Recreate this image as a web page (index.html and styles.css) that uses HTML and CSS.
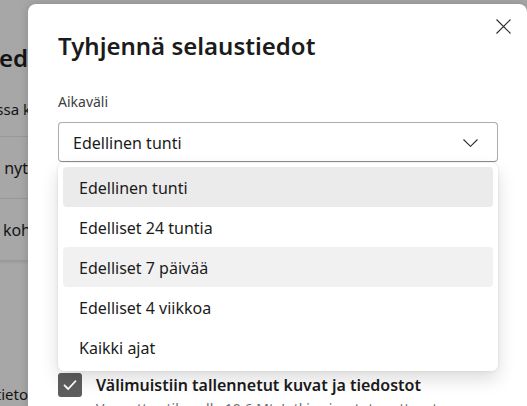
FILE: index.html
```html
<!DOCTYPE html>
<html lang="fi">
<head>
<meta charset="utf-8">
<title>Tyhjennä selaustiedot</title>
<link rel="stylesheet" href="styles.css">
</head>
<body>
<div class="page">
  <div class="bg">
    <div class="bg-line bg-title"><span>Selaustied</span></div>
    <div class="bg-line bg-sub"><span class="cut">Tietosuojassa k</span></div>
    <div class="bg-card">
      <div class="bg-line bg-row"><span>nyt</span></div>
      <div class="bg-line bg-row"><span class="cut">Valitse tyhjennettävät koh</span></div>
    </div>
    <div class="bg-line bg-foot"><span>selaustieto</span></div>
  </div>

  <div class="dialog">
    <div class="dlg-head">
      <h1 class="dlg-title">Tyhjennä selaustiedot</h1>
      <button class="close" aria-label="Sulje">
        <svg width="15" height="15" viewBox="0 0 15 15"><path d="M0.5 0.5 L14.5 14.5 M14.5 0.5 L0.5 14.5" stroke="#2b2b2b" stroke-width="1.1" fill="none"/></svg>
      </button>
    </div>
    <div class="field-label">Aikaväli</div>
    <div class="field">
      <div class="select">
        <span>Edellinen tunti</span>
        <svg width="15" height="8" viewBox="0 0 15 8"><path d="M0.5 0.5 L7.5 7.3 L14.5 0.5" stroke="#2b2b2b" stroke-width="1.1" fill="none"/></svg>
      </div>
      <div class="menu">
        <div class="menu-item selected">Edellinen tunti</div>
        <div class="menu-item">Edelliset 24 tuntia</div>
        <div class="menu-item hover">Edelliset 7 päivää</div>
        <div class="menu-item">Edelliset 4 viikkoa</div>
        <div class="menu-item">Kaikki ajat</div>
      </div>
    </div>
    <div class="option">
      <span class="checkbox">
        <svg width="24" height="24" viewBox="0 0 24 24"><path d="M6.5 12.3 L10.2 16 L17.5 8.2" stroke="#fff" stroke-width="1.8" fill="none" stroke-linecap="round" stroke-linejoin="round"/></svg>
      </span>
      <div class="option-text">
        <div class="option-title">Välimuistiin tallennetut kuvat ja tiedostot</div>
        <div class="option-sub">Vapauttaa tilaa alle 10,6 Mt. Jotkin sivustot saattavat</div>
      </div>
    </div>
  </div>
</div>
</body>
</html>
```

FILE: styles.css
```css
* { box-sizing: border-box; }

body {
  margin: 0;
  width: 527px;
  height: 406px;
  overflow: hidden;
  background: #a7a7a7;
  font-family: "Noto Sans", "Segoe UI", sans-serif;
  color: #1b1b1b;
}

.page {
  position: relative;
  height: 406px;
}

/* background page under the overlay */
.bg {
  width: 28px;
  height: 406px;
  overflow: hidden;
  display: flex;
  flex-direction: column;
  color: #141414;
}

.bg-line {
  display: flex;
  justify-content: flex-end;
  white-space: nowrap;
}

.bg-line .cut {
  margin-right: -3px;
}

.bg-title {
  font-size: 24px;
  font-weight: 600;
  line-height: 32px;
  margin-top: 42px;
}

.bg-sub {
  font-size: 15px;
  line-height: 20px;
  margin-top: 25px;
}

.bg-card {
  margin-top: 17px;
  border-top: 1px solid #989898;
  box-shadow: 0 2px 2px rgba(0, 0, 0, 0.06);
}

.bg-row {
  height: 62px;
  align-items: center;
  font-size: 16px;
  border-bottom: 1px solid #989898;
}

.bg-foot {
  margin-top: auto;
  margin-bottom: 2px;
  font-size: 15px;
  line-height: 20px;
}

/* dialog */
.dialog {
  position: absolute;
  left: 28px;
  top: 4px;
  width: 499px;
  height: 430px;
  background: #fff;
  border-radius: 8px;
  box-shadow: 0 0 10px rgba(0, 0, 0, 0.18);
  padding: 0 29px 0 30px;
}

.dlg-head {
  display: flex;
  justify-content: space-between;
  align-items: flex-start;
  padding-top: 15px;
}

.dlg-title {
  margin: 11px 0 0 0;
  font-size: 24px;
  font-weight: 600;
  line-height: 32px;
  color: #1b1b1b;
}

.close {
  width: 15px;
  height: 15px;
  padding: 0;
  margin-right: -13px;
  border: 0;
  background: none;
  display: flex;
}

.field-label {
  margin-top: 30px;
  font-size: 14px;
  line-height: 20px;
  color: #3d3d3d;
}

.field {
  position: relative;
  margin-top: 10px;
}

.select {
  height: 40px;
  border: 1px solid #ababab;
  border-bottom-color: #8f8f8f;
  border-radius: 4px;
  display: flex;
  align-items: center;
  justify-content: space-between;
  padding: 1px 19px 0 14px;
  font-size: 16px;
}

.menu {
  position: absolute;
  left: 0;
  right: 0;
  top: calc(100% + 1px);
  background: #fff;
  border-radius: 6px;
  padding: 4px 5px;
  box-shadow: 0 8px 18px rgba(0, 0, 0, 0.14), 0 0 3px rgba(0, 0, 0, 0.1);
  z-index: 2;
}

.menu-item {
  height: 40px;
  display: flex;
  align-items: center;
  padding: 2px 0 0 16px;
  border-radius: 4px;
  font-size: 16px;
  color: #1b1b1b;
}

.menu-item.selected { background: #ebebeb; }
.menu-item.hover { background: #f1f1f1; }

.option {
  display: flex;
  gap: 14px;
  margin-top: 211px;
}

.checkbox {
  width: 24px;
  height: 24px;
  flex: none;
  border-radius: 3px;
  background: #5e5e5e;
  display: flex;
}

.option-text {
  margin-top: 1px;
  white-space: nowrap;
}

.option-title {
  font-size: 16px;
  font-weight: 600;
  line-height: 22px;
  color: #1b1b1b;
}

.option-sub {
  margin-top: 3px;
  font-size: 14px;
  line-height: 20px;
  color: #6b6b6b;
}
```
